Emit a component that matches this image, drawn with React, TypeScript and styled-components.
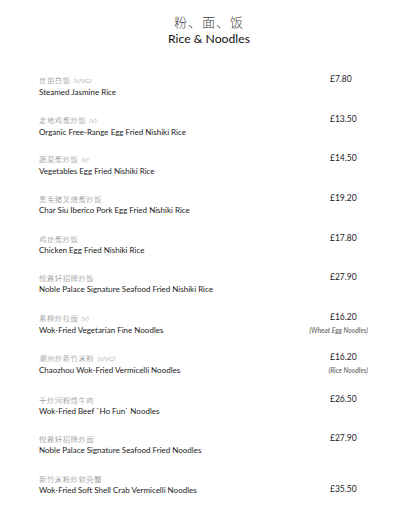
import React from "react";
import styled, { createGlobalStyle } from "styled-components";

const Global = createGlobalStyle`
  html, body { margin: 0; padding: 0; background: #fff; }
  body { font-family: Lato, "Noto Sans", "Noto Sans CJK SC", sans-serif; color: #1a1a1a; }
`;

const Page = styled.div`
  width: 416px;
  height: 512px;
  overflow: hidden;
  display: flex;
  flex-direction: column;
`;

const Header = styled.header`
  display: flex;
  flex-direction: column;
  align-items: center;
  padding-top: 13px;
  padding-left: 2px;
`;

const TitleZh = styled.div`
  font-family: "Noto Sans CJK SC", sans-serif;
  font-size: 13px;
  line-height: 17px;
  color: #444;
  letter-spacing: 1px;
  font-weight: 300;
`;

const TitleEn = styled.div`
  font-size: 12.2px;
  line-height: 17px;
  color: #111;
`;

const List = styled.div`
  display: flex;
  flex-direction: column;
  padding: 27px 48px 0 39px;
  gap: 15.7px;
`;

const Row = styled.div<{ $extra?: number }>`
  display: flex;
  justify-content: space-between;
  height: 24px;
  margin-top: ${(p) => p.$extra ?? 0}px;
`;

const Names = styled.div`
  display: flex;
  flex-direction: column;
`;

const Zh = styled.div`
  font-family: "Noto Sans CJK SC", sans-serif;
  font-size: 7.4px;
  line-height: 11px;
  color: #777;
  letter-spacing: 0.5px;
  font-weight: 300;
`;

const Tag = styled.span`
  font-family: Lato, sans-serif;
  font-style: italic;
  font-size: 6.5px;
  letter-spacing: 0;
  color: #666;
  margin-left: 3px;
`;

const En = styled.div`
  font-size: 8px;
  line-height: 13px;
  color: #1a1a1a;
`;

const PriceCol = styled.div<{ $low?: boolean }>`
  width: 38px;
  display: flex;
  flex-direction: column;
  align-items: flex-end;
  padding-top: ${(p) => (p.$low ? 11 : 0)}px;
`;

const Price = styled.div`
  align-self: flex-start;
  font-size: 8.5px;
  line-height: 11px;
  color: #1a1a1a;
  white-space: nowrap;
`;

const Note = styled.div`
  font-size: 6.8px;
  line-height: 14px;
  font-style: italic;
  color: #555;
  white-space: nowrap;
`;

type Item = {
  zh: string;
  tag?: string;
  en: string;
  price: string;
  note?: string;
  low?: boolean;
  extra?: number;
};

const items: Item[] = [
  { zh: "丝苗白饭", tag: "(V/VG)", en: "Steamed Jasmine Rice", price: "£7.80" },
  { zh: "走地鸡蛋炒饭", tag: "(V)", en: "Organic Free-Range Egg Fried Nishiki Rice", price: "£13.50" },
  { zh: "蔬菜蛋炒饭", tag: "(V)", en: "Vegetables Egg Fried Nishiki Rice", price: "£14.50" },
  { zh: "黑毛猪叉烧蛋炒饭", en: "Char Siu Iberico Pork Egg Fried Nishiki Rice", price: "£19.20" },
  { zh: "鸡丝蛋炒饭", en: "Chicken Egg Fried Nishiki Rice", price: "£17.80" },
  { zh: "悦雅轩招牌炒饭", en: "Noble Palace Signature Seafood Fried Nishiki Rice", price: "£27.90" },
  { zh: "素柳炒拉面", tag: "(V)", en: "Wok-Fried Vegetarian Fine Noodles", price: "£16.20", note: "(Wheat Egg Noodles)" },
  { zh: "潮州炒新竹米粉", tag: "(V/VG)", en: "Chaozhou Wok-Fried Vermicelli Noodles", price: "£16.20", note: "(Rice Noodles)" },
  { zh: "干炒河粉焓牛肉", en: "Wok-Fried Beef `Ho Fun` Noodles", price: "£26.50", extra: 2 },
  { zh: "悦雅轩招牌炒面", en: "Noble Palace Signature Seafood Fried Noodles", price: "£27.90" },
  { zh: "新竹米粉炒软壳蟹", en: "Wok-Fried Soft Shell Crab Vermicelli Noodles", price: "£35.50", low: true },
];

export default function App() {
  return (
    <Page>
      <Global />
      <Header>
        <TitleZh>粉、面、饭</TitleZh>
        <TitleEn>Rice &amp; Noodles</TitleEn>
      </Header>
      <List>
        {items.map((it, i) => (
          <Row key={i} $extra={it.extra}>
            <Names>
              <Zh>
                {it.zh}
                {it.tag && <Tag>{it.tag}</Tag>}
              </Zh>
              <En>{it.en}</En>
            </Names>
            <PriceCol $low={it.low}>
              <Price>{it.price}</Price>
              {it.note && <Note>{it.note}</Note>}
            </PriceCol>
          </Row>
        ))}
      </List>
    </Page>
  );
}
